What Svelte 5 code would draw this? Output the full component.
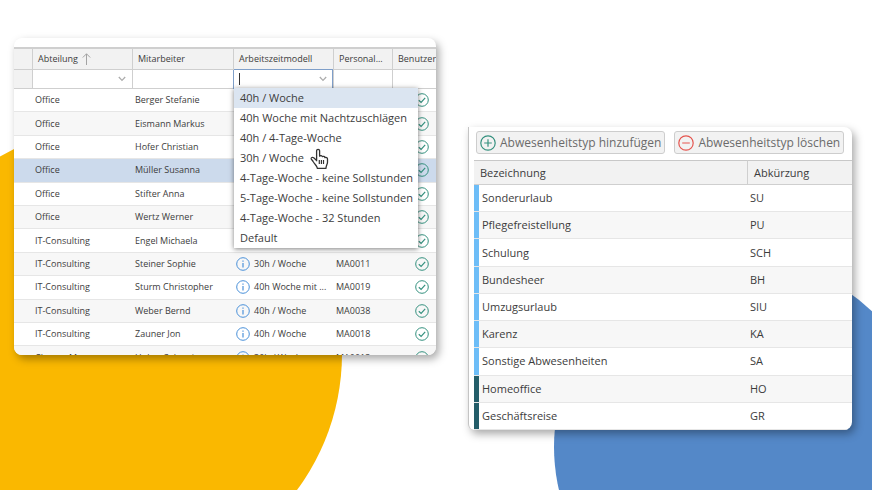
<script lang="ts">
  type Employee = { department: string; name: string; model: string; number: string };

  const employees: Employee[] = [
    { department: 'Office', name: 'Berger Stefanie', model: '', number: '' },
    { department: 'Office', name: 'Eismann Markus', model: '', number: '' },
    { department: 'Office', name: 'Hofer Christian', model: '', number: '' },
    { department: 'Office', name: 'Müller Susanna', model: '', number: '' },
    { department: 'Office', name: 'Stifter Anna', model: '', number: '' },
    { department: 'Office', name: 'Wertz Werner', model: '', number: '' },
    { department: 'IT-Consulting', name: 'Engel Michaela', model: '', number: '' },
    { department: 'IT-Consulting', name: 'Steiner Sophie', model: '30h / Woche', number: 'MA0011' },
    { department: 'IT-Consulting', name: 'Sturm Christopher', model: '40h Woche mit ...', number: 'MA0019' },
    { department: 'IT-Consulting', name: 'Weber Bernd', model: '40h / Woche', number: 'MA0038' },
    { department: 'IT-Consulting', name: 'Zauner Jon', model: '40h / Woche', number: 'MA0018' },
    { department: 'Change Management', name: 'Huber Sebastian', model: '30h / Woche', number: 'MA0013' },
  ];

  const models = [
    '40h / Woche',
    '40h Woche mit Nachtzuschlägen',
    '40h / 4-Tage-Woche',
    '30h / Woche',
    '4-Tage-Woche - keine Sollstunden',
    '5-Tage-Woche - keine Sollstunden',
    '4-Tage-Woche - 32 Stunden',
    'Default',
  ];

  const absences = [
    { label: 'Sonderurlaub', short: 'SU', kind: 'leave' },
    { label: 'Pflegefreistellung', short: 'PU', kind: 'leave' },
    { label: 'Schulung', short: 'SCH', kind: 'leave' },
    { label: 'Bundesheer', short: 'BH', kind: 'leave' },
    { label: 'Umzugsurlaub', short: 'SIU', kind: 'leave' },
    { label: 'Karenz', short: 'KA', kind: 'leave' },
    { label: 'Sonstige Abwesenheiten', short: 'SA', kind: 'leave' },
    { label: 'Homeoffice', short: 'HO', kind: 'work' },
    { label: 'Geschäftsreise', short: 'GR', kind: 'work' },
  ];

  let selectedRow = $state(3);
  let activeModel = $state(0);
  let modelFilter = $state('');
</script>

{#snippet chevron()}
  <svg class="chevron" aria-hidden="true" width="8" height="6" viewBox="0 0 8 6" fill="none" stroke="#adadad" stroke-width="1.3">
    <path d="M0.8 1 4 4.4 7.2 1" />
  </svg>
{/snippet}

<main class="page">
  <svg class="backdrop" aria-hidden="true" viewBox="0 0 872 490" preserveAspectRatio="xMidYMin slice">
    <circle cx="114" cy="354" r="228" fill="#fab800" />
    <circle cx="742" cy="447" r="188" fill="#5488c8" />
  </svg>

  <!-- Employee list -->
  <section class="card employees" aria-label="Mitarbeiter">
    <table class="grid grid--employees">
      <colgroup>
        <col class="w-handle" /><col class="w-department" /><col class="w-name" /><col class="w-model" /><col class="w-number" /><col />
      </colgroup>
      <thead>
        <tr class="head">
          <td></td>
          <th scope="col">
            <span class="sorted">Abteilung
              <svg aria-hidden="true" width="9" height="12" viewBox="0 0 9 12" fill="none" stroke="#a3a3a3" stroke-width="1">
                <path d="M4.5 12V0.8M0.8 4.5 4.5 0.8 8.2 4.5" />
              </svg>
            </span>
          </th>
          <th scope="col">Mitarbeiter</th>
          <th scope="col">Arbeitszeitmodell</th>
          <th scope="col">Personal...</th>
          <th scope="col">Benutzer</th>
        </tr>
        <tr class="filters">
          <td class="filters__handle"></td>
          <td>
            <div class="field">
              <select aria-label="Abteilung filtern"><option></option><option>Office</option><option>IT-Consulting</option></select>
              {@render chevron()}
            </div>
          </td>
          <td><div class="field"><input type="text" aria-label="Mitarbeiter filtern" /></div></td>
          <td class="filters__open">
            <div class="field field--active">
              <input type="text" role="combobox" aria-label="Arbeitszeitmodell filtern" aria-expanded="true" aria-controls="models" bind:value={modelFilter} />
              {#if modelFilter === ''}<span class="caret"></span>{/if}
              {@render chevron()}
            </div>
            <ul class="menu" id="models" role="listbox" aria-label="Arbeitszeitmodell">
              {#each models as model, i}
                <li role="option" aria-selected={i === activeModel}>
                  <button type="button" class="menu__item" class:active={i === activeModel} onclick={() => (activeModel = i)}>{model}</button>
                </li>
              {/each}
            </ul>
            <svg class="pointer" aria-hidden="true" width="19" height="22" viewBox="0 0 19 22">
              <path
                d="M6.6 13.2V3.1C6.6 0.8 9.6 0.8 9.6 3.1V8.2C10.4 7.3 12 7.6 12.3 8.7C13.2 8 14.7 8.4 14.9 9.6C16 9 17.5 9.6 17.5 11V14.2C17.5 16 16.2 17.2 15.9 20.4H7.4C7.2 17.8 4.6 16.4 3.3 13.8C2.7 12.5 1.8 11.9 1.2 11C0.8 9.6 2.4 8.8 3.7 9.8L6.6 12.4"
                fill="#fff" stroke="#333" stroke-width="1.3" stroke-linejoin="round"
              />
              <path d="M9.3 12V16M11.4 12V16M13.5 12V16" stroke="#333" stroke-width="1.2" />
            </svg>
          </td>
          <td><div class="field"><input type="text" aria-label="Personalnummer filtern" /></div></td>
          <td><div class="field"><input type="text" aria-label="Benutzer filtern" /></div></td>
        </tr>
      </thead>
      <tbody>
        {#each employees as row, i}
          <tr class:selected={i === selectedRow} onclick={() => (selectedRow = i)}>
            <td></td>
            <td>{row.department}</td>
            <td>{row.name}</td>
            <td>
              {#if row.model}
                <span class="model">
                  <svg aria-hidden="true" width="14" height="14" viewBox="0 0 14 14" fill="none" stroke="#4a90d9">
                    <circle cx="7" cy="7" r="6.3" />
                    <path d="M7 6V10.4M7 3.4V4.8" stroke-width="1.2" />
                  </svg>
                  {row.model}
                </span>
              {/if}
            </td>
            <td>{row.number}</td>
            <td class="check">
              <svg role="img" aria-label="Ja" width="14" height="14" viewBox="0 0 14 14" fill="none" stroke="#35917f">
                <circle cx="7" cy="7" r="6.3" />
                <path d="M3.8 7.3 6.1 9.4 10.2 4.9" stroke-width="1.2" />
              </svg>
            </td>
          </tr>
        {/each}
      </tbody>
    </table>
  </section>

  <!-- Absence types -->
  <section class="card absences" aria-label="Abwesenheitstypen">
    <div class="toolbar">
      <button type="button">
        <svg aria-hidden="true" width="16" height="16" viewBox="0 0 16 16" fill="none" stroke="#35917f" stroke-width="1.2">
          <circle cx="8" cy="8" r="7.2" /><path d="M4.2 8H11.8M8 4.2V11.8" />
        </svg>
        Abwesenheitstyp hinzufügen
      </button>
      <button type="button">
        <svg aria-hidden="true" width="16" height="16" viewBox="0 0 16 16" fill="none" stroke="#e5554f" stroke-width="1.2">
          <circle cx="8" cy="8" r="7.2" /><path d="M4.2 8H11.8" />
        </svg>
        Abwesenheitstyp löschen
      </button>
    </div>
    <table class="grid grid--absences">
      <colgroup><col class="w-strip" /><col /><col class="w-short" /></colgroup>
      <thead>
        <tr class="head">
          <th scope="col" colspan="2">Bezeichnung</th>
          <th scope="col">Abkürzung</th>
        </tr>
      </thead>
      <tbody>
        {#each absences as row}
          <tr>
            <td class="strip strip--{row.kind}"></td>
            <td>{row.label}</td>
            <td>{row.short}</td>
          </tr>
        {/each}
      </tbody>
    </table>
  </section>
</main>

<style>
  :global(body) {
    margin: 0;
    background: #fff;
  }

  .page {
    position: relative;
    display: grid;
    grid-template-columns: 422fr 384fr;
    gap: 32px;
    align-items: start;
    box-sizing: border-box;
    min-height: 100vh;
    padding: 38px 20px 38px 14px;
    overflow: hidden;
    font-family: "Open Sans", "Noto Sans", sans-serif;
    color: #3c3c3c;
  }

  .backdrop {
    position: absolute;
    inset: 0;
    width: 100%;
    height: 100%;
  }

  /* Cards */
  .card {
    position: relative;
    min-width: 0;
    overflow: hidden;
    background: #fff;
    border-radius: 8px;
    box-shadow: 3px 4px 9px rgba(0, 0, 0, 0.34);
  }

  .employees {
    box-sizing: border-box;
    max-height: 317px;
    padding-top: 9px;
  }

  .absences {
    margin-top: 89px;
    padding-left: 5px;
    border-left: 1px solid #c4c4c4;
    border-radius: 0 8px 8px 6px;
  }

  /* Tables */
  .grid {
    width: 100%;
    table-layout: fixed;
    border-collapse: separate;
    border-spacing: 0;
  }

  .grid th,
  .grid td {
    padding: 0 0 0 3px;
    text-align: left;
    font-weight: 400;
    white-space: nowrap;
    overflow: hidden;
    vertical-align: middle;
  }

  .head th,
  .head td {
    background: #f2f2f2;
    border-bottom: 1px solid #cfcfcf;
  }

  .grid .head th {
    padding-left: 6px;
    border-left: 1px solid #cfcfcf;
  }

  .grid tbody td {
    border-bottom: 1px solid #e6e6e6;
  }

  .grid tbody tr:nth-child(even) td {
    background: #f7f7f7;
  }

  .grid--employees {
    height: 323px;
    font-size: 9px;
    line-height: 14px;
  }

  .grid--employees .head {
    height: 23px;
  }

  .grid--employees .head th,
  .grid--employees .head td {
    border-top: 2px solid #cfcfcf;
  }

  .grid--employees .head th {
    padding-left: 5px;
  }

  .grid--employees tbody tr.selected td {
    background: #ccdaec;
  }

  .w-handle { width: 18px; }
  .w-department { width: 100px; }
  .w-name { width: 101px; }
  .w-model { width: 100px; }
  .w-number { width: 59px; }
  .w-strip { width: 5px; }
  .w-short { width: 105px; }

  .sorted,
  .model {
    display: flex;
    align-items: center;
    gap: 4px;
  }

  .grid .check {
    padding-left: 23px;
  }

  .check svg {
    display: block;
  }

  /* Filter row */
  .filters {
    height: 19px;
  }

  .grid .filters td {
    position: relative;
    padding: 0;
    border-bottom: 1px solid #cfcfcf;
    border-left: 1px solid #cfcfcf;
  }

  .grid .filters .filters__handle {
    background: #f2f2f2;
    border-left: 0;
  }

  .grid .filters .filters__open {
    overflow: visible;
    border-color: #7f9fc9;
  }

  .field {
    position: relative;
    display: flex;
    height: 18px;
  }

  .field--active {
    box-shadow: 0 -1px #7f9fc9, inset -1px 0 #7f9fc9;
  }

  .field input,
  .field select {
    width: 100%;
    height: 18px;
    padding: 0 6px;
    border: 0;
    outline: 0;
    background: transparent;
    appearance: none;
    font: inherit;
    color: inherit;
  }

  .chevron {
    position: absolute;
    right: 6px;
    top: 6px;
    pointer-events: none;
  }

  .caret {
    position: absolute;
    left: 5px;
    top: 3px;
    width: 1px;
    height: 12px;
    background: #333;
  }

  .menu {
    position: absolute;
    top: 100%;
    left: 0;
    z-index: 2;
    width: 184px;
    margin: 0;
    padding: 0;
    list-style: none;
    background: #fff;
    box-shadow: 0 1px 5px rgba(0, 0, 0, 0.5);
  }

  .menu__item {
    display: block;
    width: 100%;
    height: 20px;
    padding: 0 6px;
    border: 0;
    background: transparent;
    font: inherit;
    font-size: 11px;
    line-height: 20px;
    text-align: left;
    white-space: nowrap;
    color: #3c3c3c;
  }

  .menu__item.active,
  .menu__item:hover {
    background: #dbe5f1;
  }

  .pointer {
    position: absolute;
    left: 76px;
    top: 78px;
    z-index: 3;
    pointer-events: none;
  }

  /* Absence types */
  .toolbar {
    display: flex;
    gap: 9px;
    padding: 4px 2px 6px;
  }

  .toolbar button {
    display: flex;
    align-items: center;
    gap: 4px;
    height: 23px;
    padding: 0 3px;
    border: 1px solid #cdcdcd;
    border-radius: 3px;
    background: #f2f2f2;
    font: inherit;
    font-size: 12px;
    line-height: 16px;
    white-space: nowrap;
    color: #6b6b6b;
  }

  .grid--absences {
    height: 270px;
    font-size: 11px;
    line-height: 16px;
  }

  .grid--absences .head {
    height: 25px;
  }

  .grid--absences .head th {
    border-top: 1px solid #c8c8c8;
  }

  .grid--absences .head th:first-child {
    border-left: 0;
  }

  .grid .strip {
    padding: 0;
  }

  .grid tbody tr .strip--leave,
  .grid tbody tr:nth-child(even) .strip--leave {
    background: #6dbdf7;
  }

  .grid tbody tr .strip--work,
  .grid tbody tr:nth-child(even) .strip--work {
    background: #235d69;
  }
</style>
